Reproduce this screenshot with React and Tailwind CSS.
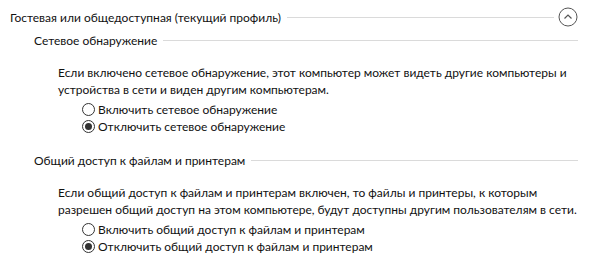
export default function App() {
    const font = { fontFamily: 'Lato, "Noto Sans", sans-serif' };
    return (
        <div className="h-[266px] w-[600px] bg-white text-[12px] leading-[17px] text-[#111]" style={font}>
            <div className="pt-[7px] pl-[10px] pr-[22px]">
                <div className="flex h-5 items-center">
                    <span className="shrink-0">Гостевая или общедоступная (текущий профиль)</span>
                    <div className="ml-[6px] mr-[4px] h-px flex-1 bg-[#dadada]" />
                    <ChevronCircle />
                </div>

                <Section
                    title="Сетевое обнаружение"
                    className="mt-[5px]"
                    lines={[
                        "Если включено сетевое обнаружение, этот компьютер может видеть другие компьютеры и",
                        "устройства в сети и виден другим компьютерам.",
                    ]}
                    options={["Включить сетевое обнаружение", "Отключить сетевое обнаружение"]}
                />

                <Section
                    title="Общий доступ к файлам и принтерам"
                    className="mt-[17px]"
                    lines={[
                        "Если общий доступ к файлам и принтерам включен, то файлы и принтеры, к которым",
                        "разрешен общий доступ на этом компьютере, будут доступны другим пользователям в сети.",
                    ]}
                    options={[
                        "Включить общий доступ к файлам и принтерам",
                        "Отключить общий доступ к файлам и принтерам",
                    ]}
                />
            </div>
        </div>
    );
}

function Section({ title, lines, options, className }) {
    return (
        <div className={className}>
            <div className="ml-6 flex items-center">
                <span className="shrink-0">{title}</span>
                <div className="ml-[6px] h-px flex-1 bg-[#dadada]" />
            </div>
            <p className="mt-[15px] ml-12 whitespace-nowrap">
                {lines[0]}
                <br />
                {lines[1]}
            </p>
            <div className="mt-[3px] ml-[72px] flex flex-col whitespace-nowrap">
                {options.map((o, i) => (
                    <label key={o} className="flex items-center">
                        <Radio checked={i === 1} />
                        <span className="ml-[3px]">{o}</span>
                    </label>
                ))}
            </div>
        </div>
    );
}

function Radio({ checked }) {
    return (
        <span className="flex h-[13px] w-[13px] items-center justify-center rounded-full border border-[#333]">
            {checked && <span className="h-[7px] w-[7px] rounded-full bg-[#333]" />}
        </span>
    );
}

function ChevronCircle() {
    return (
        <svg width="20" height="20" viewBox="0 0 20 20" className="shrink-0">
            <circle cx="10" cy="10" r="9" fill="none" stroke="#555" strokeWidth="1" />
            <path d="M6.5 11.5 L10 8 L13.5 11.5" fill="none" stroke="#555" strokeWidth="1.2" />
        </svg>
    );
}
